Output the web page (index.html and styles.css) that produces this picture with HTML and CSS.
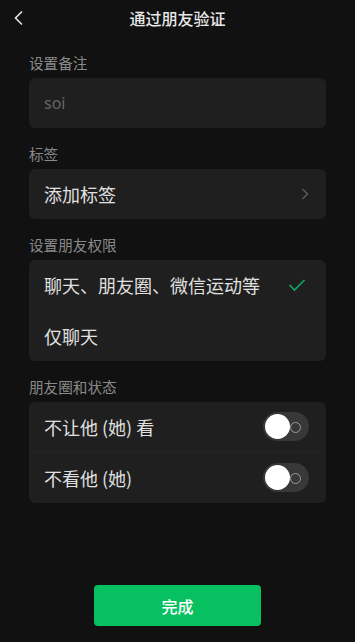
FILE: index.html
```html
<!DOCTYPE html>
<html lang="zh-CN">
  <head>
    <meta charset="UTF-8" />
    <meta name="viewport" content="width=device-width, initial-scale=1.0" />
    <title>通过朋友验证</title>
    <link rel="stylesheet" href="styles.css">
  </head>
  <body>
    <header class="barra">
      <svg class="volver" width="12" height="16" viewBox="0 0 12 16">
        <path d="M9 1.5 L2.5 8 L9 14.5" fill="none" stroke="#e6e6e6" stroke-width="1.6"/>
      </svg>
      <h1>通过朋友验证</h1>
    </header>
    <main>
      <p class="titulo">设置备注</p>
      <div class="tarjeta">
        <div class="fila campo">soi</div>
      </div>

      <p class="titulo">标签</p>
      <div class="tarjeta">
        <div class="fila">
          <span>添加标签</span>
          <svg width="8" height="12" viewBox="0 0 8 12">
            <path d="M1.5 1 L6.5 6 L1.5 11" fill="none" stroke="#5e5e5e" stroke-width="1.3"/>
          </svg>
        </div>
      </div>

      <p class="titulo">设置朋友权限</p>
      <div class="tarjeta">
        <div class="fila">
          <span>聊天、朋友圈、微信运动等</span>
          <svg class="marca" width="18" height="14" viewBox="0 0 18 14">
            <path d="M1.5 7 L6.5 12 L16.5 2" fill="none" stroke="#10a860" stroke-width="1.7"/>
          </svg>
        </div>
        <div class="fila">
          <span>仅聊天</span>
        </div>
      </div>

      <p class="titulo">朋友圈和状态</p>
      <div class="tarjeta">
        <div class="fila linea">
          <span>不让他 (她) 看</span>
          <span class="interruptor"><i></i></span>
        </div>
        <div class="fila">
          <span>不看他 (她)</span>
          <span class="interruptor"><i></i></span>
        </div>
      </div>
    </main>
    <footer>
      <button class="listo">完成</button>
    </footer>
  </body>
</html>
```

FILE: styles.css
```css
* {
    margin: 0;
    padding: 0;
    box-sizing: border-box;
}
html, body {
    height: 100%;
}
body {
    font-family: "Noto Sans CJK SC", "Noto Sans", sans-serif;
    background-color: #111111;
    color: #e2e2e2;
    width: 355px;
    height: 642px;
    display: flex;
    flex-direction: column;
    overflow: hidden;
}
.barra {
    height: 36px;
    display: flex;
    align-items: center;
    justify-content: center;
    position: relative;
}
.barra h1 {
    font-size: 16px;
    font-weight: 500;
    color: #e8e8e8;
}
/* La flecha va encima de la barra, a la izquierda */
.volver {
    position: absolute;
    left: 13px;
    top: 10px;
}
main {
    padding: 0 29px 0 29px;
    flex: 1;
}
.titulo {
    font-size: 14.6px;
    color: #8a8a8a;
    margin-top: 16px;
    line-height: 20px;
    height: 25px;
}
.titulo:first-child {
    margin-top: 17px;
}
.tarjeta {
    background-color: #1f1f1f;
    border-radius: 6px;
}
.fila {
    height: 50px;
    display: flex;
    align-items: center;
    justify-content: space-between;
    padding: 0 17px 0 15px;
    font-size: 18px;
    color: #e0e0e0;
}
.tarjeta .fila + .fila {
    height: 51px;
}
.campo {
    color: #666666;
    font-family: "Noto Sans", sans-serif;
    font-size: 16px;
}
.marca {
    margin-right: 3px;
}
.linea {
    border-bottom: 1px solid #232323;
}
.interruptor {
    width: 46px;
    height: 29px;
    border-radius: 15px;
    background-color: #383838;
    position: relative;
}
.interruptor::after {
    content: "";
    position: absolute;
    right: 8px;
    top: 10px;
    width: 9px;
    height: 9px;
    border: 1.3px solid #9a9a9a;
    border-radius: 50%;
}
.interruptor i {
    position: absolute;
    left: 2px;
    top: 2px;
    width: 25px;
    height: 25px;
    border-radius: 50%;
    background-color: #ffffff;
}
footer {
    display: flex;
    justify-content: center;
    padding-bottom: 16px;
}
.listo {
    width: 167px;
    height: 41px;
    border: none;
    border-radius: 4px;
    background-color: #07c160;
    color: #ffffff;
    font-family: "Noto Sans CJK SC", sans-serif;
    font-size: 16px;
    font-weight: 500;
}
```
